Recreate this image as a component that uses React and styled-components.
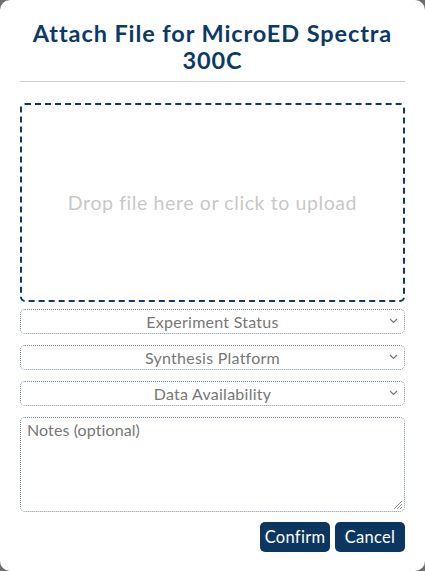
import React from "react";
import styled, { createGlobalStyle } from "styled-components";

const Global = createGlobalStyle`
  html, body { margin: 0; padding: 0; background: #6e6e6e; }
  body { font-family: Lato, "Open Sans", sans-serif; }
  * { box-sizing: border-box; }
`;

const Modal = styled.div`
  width: 425px;
  height: 571px;
  background: #fff;
  border-radius: 10px;
  padding: 20px 20px 0;
  display: flex;
  flex-direction: column;
`;

const Title = styled.h2`
  margin: 0;
  font-family: Lato, sans-serif;
  font-weight: 700;
  font-size: 23.5px;
  line-height: 27px;
  letter-spacing: 0.9px;
  color: #0b3a66;
  text-align: center;
  padding: 0 4px;
`;

const Rule = styled.hr`
  border: 0;
  border-top: 1px solid #cfcfcf;
  margin: 7px 0 21px;
`;

const Drop = styled.div`
  height: 199px;
  border: 2px dashed #0b3a66;
  border-radius: 5px;
  display: flex;
  align-items: center;
  justify-content: center;
  color: #c8c8c8;
  font-size: 19.5px;
  letter-spacing: 0.6px;
`;

const Fields = styled.div`
  display: flex;
  flex-direction: column;
  gap: 11px;
  margin-top: 7px;
`;

const SelectBox = styled.div`
  position: relative;
  height: 25px;
  border: 1px dotted #7d8ea4;
  border-radius: 5px;
  display: flex;
  align-items: center;
  justify-content: center;
  color: #777;
  font-size: 16px;
  letter-spacing: 0.25px;
`;

const Chevron = styled.svg`
  position: absolute;
  right: 6px;
  top: 8px;
`;

const Notes = styled.div`
  position: relative;
  height: 95px;
  border: 1px dotted #7d8ea4;
  border-radius: 5px;
  padding: 2px 6px;
  color: #777;
  font-size: 16px;
  letter-spacing: 0.1px;
`;

const Grip = styled.svg`
  position: absolute;
  right: 1px;
  bottom: 1px;
`;

const Actions = styled.div`
  display: flex;
  justify-content: flex-end;
  gap: 5px;
  margin-top: 10px;
`;

const Button = styled.button`
  background: #0b3660;
  color: #fff;
  border: 0;
  border-radius: 5px;
  height: 30px;
  width: 70px;
  font-family: Lato, sans-serif;
  font-size: 16.5px;
  letter-spacing: 0.3px;
  padding: 0;
`;

const Select = ({ children }) => (
  <SelectBox>
    {children}
    <Chevron width="9" height="6" viewBox="0 0 9 6">
      <path d="M1 1l3.5 3.5L8 1" fill="none" stroke="#777" strokeWidth="1.2" />
    </Chevron>
  </SelectBox>
);

export default function App() {
  return (
    <>
      <Global />
      <Modal>
        <Title>Attach File for MicroED Spectra 300C</Title>
        <Rule />
        <Drop>Drop file here or click to upload</Drop>
        <Fields>
          <Select>Experiment Status</Select>
          <Select>Synthesis Platform</Select>
          <Select>Data Availability</Select>
          <Notes>
            Notes (optional)
            <Grip width="12" height="12" viewBox="0 0 12 12">
              <path d="M11 3L3 11M11 6L6 11M11 9L9 11" stroke="#999" strokeWidth="1" />
            </Grip>
          </Notes>
        </Fields>
        <Actions>
          <Button>Confirm</Button>
          <Button>Cancel</Button>
        </Actions>
      </Modal>
    </>
  );
}
